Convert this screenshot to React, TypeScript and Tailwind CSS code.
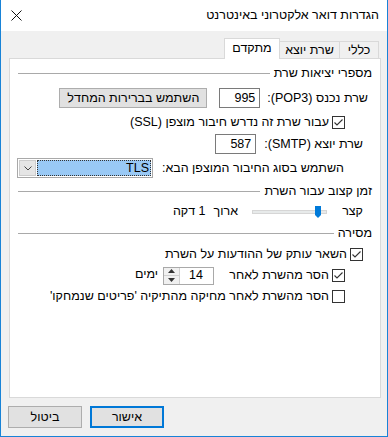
import React from 'react';

const font = { fontFamily: '"Liberation Sans", "DejaVu Sans", sans-serif' };

const Check = ({ checked }: { checked?: boolean }) => (
  <span className="w-[13px] h-[13px] shrink-0 border border-[#333333] bg-white flex items-center justify-center">
    {checked && (
      <svg width="11" height="11" viewBox="0 0 11 11">
        <path d="M1.5 5.5 L4 8 L9.5 2.5" fill="none" stroke="#333333" strokeWidth="1.1" />
      </svg>
    )}
  </span>
);

const GroupHeader = ({ title }: { title: string }) => (
  <div className="h-[15px] mt-[7px] flex items-center gap-[4px] pr-[8px] pl-[8px]">
    <span className="whitespace-nowrap leading-none">{title}</span>
    <span className="flex-1 h-px bg-[#a9a9a9]" />
  </div>
);

const NumBox = ({ value, w }: { value: string; w: string }) => (
  <div className={`${w} h-[20px] border border-[#7a7a7a] bg-white flex items-center justify-start pr-[4px]`}>
    <span dir="ltr" className="leading-none">{value}</span>
  </div>
);

export default function App() {
  return (
    <div
      dir="rtl"
      style={font}
      className="w-[388px] h-[437px] bg-[#f0f0f0] border-l border-r border-b border-[#1883d7] flex flex-col text-[12.5px] text-black"
    >
      {/* Title bar */}
      <div className="h-[31px] bg-white flex items-center justify-between pr-[8px] pl-[10px] shrink-0">
        <span className="leading-none">הגדרות דואר אלקטרוני באינטרנט</span>
        <svg width="11" height="11" viewBox="0 0 11 11">
          <path d="M0.5 0.5 L10.5 10.5 M10.5 0.5 L0.5 10.5" stroke="#111" strokeWidth="1" />
        </svg>
      </div>

      {/* Body */}
      <div className="flex-1 flex flex-col pt-[7px] pl-[8px] pr-[6px]">
        {/* Tabs */}
        <div className="h-[21px] -mb-px flex items-end pr-[2px] relative z-10">
          <div className="w-[40px] h-[18px] border border-b-0 border-[#d9d9d9] flex items-center justify-center">כללי</div>
          <div className="w-[60px] h-[18px] border border-b-0 border-r-0 border-[#d9d9d9] flex items-center justify-center">שרת יוצא</div>
          <div className="w-[56px] h-[21px] -mr-px bg-white border border-b-0 border-[#d9d9d9] flex items-center justify-center pb-[2px]">מתקדם</div>
        </div>

        {/* Panel */}
        <div className="h-[340px] bg-white border border-[#d9d9d9] flex flex-col">
          <GroupHeader title="מספרי יציאות שרת" />

          <div className="h-[20px] mt-[7px] flex items-center pr-[12px]">
            <span className="whitespace-nowrap">שרת נכנס (POP3):</span>
            <div className="mr-[7px]"><NumBox value="995" w="w-[41px]" /></div>
            <button className="mr-[12px] w-[148px] h-[20px] bg-[#e1e1e1] border border-[#adadad] flex items-center justify-center leading-none">
              השתמש בברירות המחדל
            </button>
          </div>

          <div className="h-[15px] mt-[7px] flex items-center gap-[3px] pr-[35px]">
            <Check checked />
            <span className="whitespace-nowrap">עבור שרת זה נדרש חיבור מוצפן (SSL)</span>
          </div>

          <div className="h-[20px] mt-[4px] flex items-center pr-[17px]">
            <span className="whitespace-nowrap">שרת יוצא (SMTP):</span>
            <div className="mr-[8px]"><NumBox value="587" w="w-[41px]" /></div>
          </div>

          <div className="h-[20px] mt-[4px] flex items-center pr-[36px]">
            <span className="w-[181px] whitespace-nowrap">השתמש בסוג החיבור המוצפן הבא:</span>
            <div className="mr-[10px] w-[136px] h-[20px] border border-[#a9a9a9] bg-white flex items-center p-px gap-px">
              <div className="flex-1 h-full bg-[#99c9f5] border border-dotted border-[#333] flex items-center pr-[1px]">
                <span className="leading-none">TLS</span>
              </div>
              <div className="w-[17px] h-full bg-[#e5e5e5] border border-[#cccccc] flex items-center justify-center">
                <svg width="8" height="5" viewBox="0 0 8 5">
                  <path d="M0.5 0.5 L4 4 L7.5 0.5" fill="none" stroke="#444" strokeWidth="1" />
                </svg>
              </div>
            </div>
          </div>

          <div className="mt-[-1px]">
            <GroupHeader title="זמן קצוב עבור השרת" />
          </div>

          <div className="h-[15px] mt-[5px] flex items-center pr-[17px]">
            <span className="w-[22px] whitespace-nowrap">קצר</span>
            <div className="mr-[14px] w-[75px] h-[14px] relative flex items-center">
              <div className="w-full h-[4px] bg-[#e7eaea] border border-[#d6d6d6]" />
              <svg className="absolute right-[6px] top-[1px]" width="6" height="12" viewBox="0 0 6 12">
                <path d="M0 0 H6 V9 L3 12 L0 9 Z" fill="#007ad9" />
              </svg>
            </div>
            <span className="mr-[14px] whitespace-nowrap">ארוך</span>
            <span className="mr-[8px] whitespace-nowrap">1 דקה</span>
          </div>

          <GroupHeader title="מסירה" />

          <div className="h-[15px] mt-[6px] flex items-center gap-[3px] pr-[17px]">
            <Check checked />
            <span className="whitespace-nowrap">השאר עותק של ההודעות על השרת</span>
          </div>

          <div className="h-[19px] mt-[4px] flex items-center pr-[35px]">
            <Check checked />
            <span className="w-[101px] mr-[3px] whitespace-nowrap">הסר מהשרת לאחר</span>
            <div className="mr-[14px] w-[51px] h-[18px] border border-[#a9a9a9] bg-white flex items-center">
              <span className="flex-1 pr-[10px] leading-none">14</span>
              <div className="w-[16px] h-full border-r border-[#d0d0d0] flex flex-col">
                <div className="flex-1 bg-[#f0f0f0] border-b border-[#d0d0d0] flex items-center justify-center">
                  <svg width="7" height="4" viewBox="0 0 7 4"><path d="M0 4 L3.5 0 L7 4 Z" fill="#333" /></svg>
                </div>
                <div className="flex-1 bg-[#f0f0f0] flex items-center justify-center">
                  <svg width="7" height="4" viewBox="0 0 7 4"><path d="M0 0 L3.5 4 L7 0 Z" fill="#333" /></svg>
                </div>
              </div>
            </div>
            <span className="mr-[5px] mb-[3px] whitespace-nowrap">ימים</span>
          </div>

          <div className="h-[15px] mt-[4px] flex items-center gap-[3px] pr-[35px]">
            <Check />
            <span className="whitespace-nowrap">הסר מהשרת לאחר מחיקה מהתיקיה 'פריטים שנמחקו'</span>
          </div>
        </div>

        {/* Buttons */}
        <div dir="ltr" className="mt-[8px] h-[22px] flex items-center gap-[8px] -ml-px">
          <button className="w-[74px] h-[22px] bg-[#e1e1e1] border border-[#adadad] flex items-center justify-center leading-none">ביטול</button>
          <button className="w-[74px] h-[22px] bg-[#e1e1e1] border-2 border-[#0078d7] flex items-center justify-center leading-none">אישור</button>
        </div>
      </div>
    </div>
  );
}
